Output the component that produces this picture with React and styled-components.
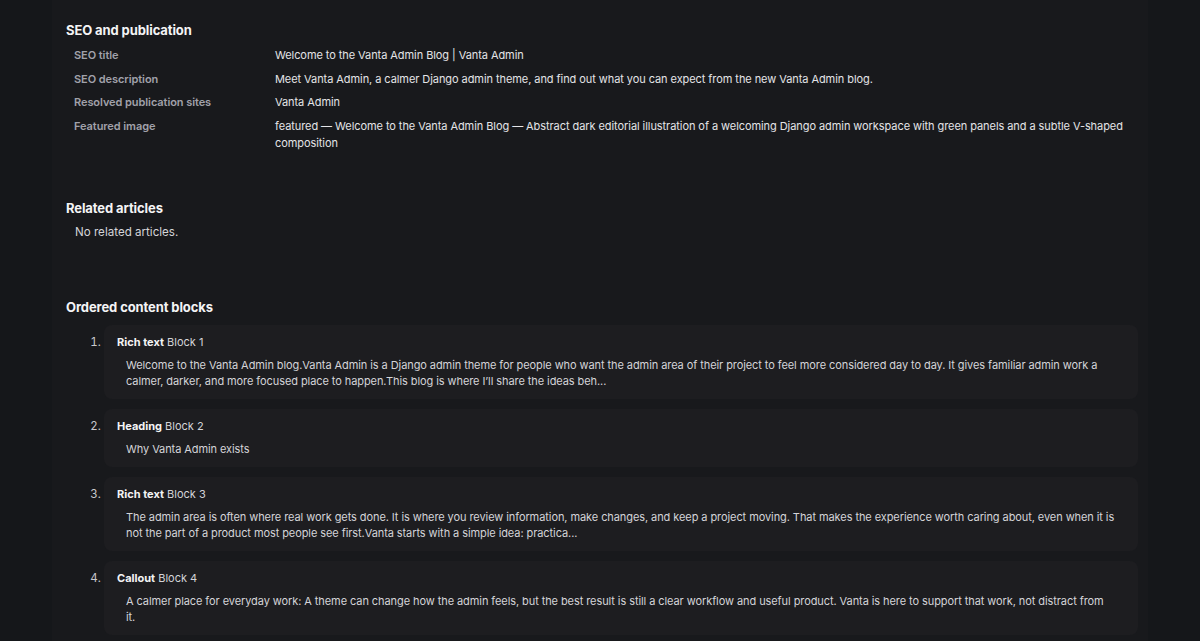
import React from 'react';
import styled, { createGlobalStyle } from 'styled-components';

const GlobalStyle = createGlobalStyle`
  html, body {
    margin: 0;
    padding: 0;
    background: #15171a;
  }
  body {
    font-family: Inter, "Noto Sans", "Liberation Sans", sans-serif;
    color: #e4e4e7;
    -webkit-font-smoothing: antialiased;
  }
`;

const Page = styled.main`
  width: 1096px;
  min-height: 100vh;
  margin: 0 auto;
  padding: 20px 10px 20px 14px;
  box-sizing: border-box;
  background: #18191c;
`;

const Section = styled.section`
  margin-bottom: ${(p) => p.$after || 0}px;
`;

const SectionTitle = styled.h2`
  margin: 0;
  font-size: 13px;
  line-height: 20px;
  font-weight: 700;
  letter-spacing: -0.1px;
  color: #f4f4f5;
`;

const Fields = styled.dl`
  display: grid;
  grid-template-columns: 201px 1fr;
  row-gap: 6.6px;
  margin: 7px 0 0 8px;
  font-size: 11px;
  line-height: 17px;
  letter-spacing: -0.07px;
`;

const Label = styled.dt`
  font-weight: 600;
  color: #a1a1aa;
`;

const Value = styled.dd`
  margin: 0;
  color: #e4e4e7;
  padding-right: 12px;
`;

const Empty = styled.p`
  margin: 6.5px 0 0 9px;
  font-size: 11.6px;
  line-height: 17px;
  color: #d4d4d8;
`;

const BlockList = styled.ol`
  margin: 8px 0 0;
  padding: 0 0 0 38px;
  list-style: decimal outside;
  display: flex;
  flex-direction: column;
  gap: 10px;
`;

const Block = styled.li`
  background: #1d1d20;
  border-radius: 8px;
  padding: 9px 23.5px 10px 13px;
  font-size: 11px;
  line-height: 16px;

  &::marker {
    color: #c8c8cc;
    font-size: 11.5px;
  }
`;

const BlockHead = styled.div`
  color: #d4d4d8;
`;

const BlockKind = styled.strong`
  font-weight: 700;
  color: #f4f4f5;
`;

const BlockBody = styled.p`
  margin: 7px 0 0 9px;
  font-size: 11px;
  line-height: 16px;
  letter-spacing: -0.08px;
  color: #d4d4d8;
`;

const seo = [
  ['SEO title', 'Welcome to the Vanta Admin Blog | Vanta Admin'],
  ['SEO description', 'Meet Vanta Admin, a calmer Django admin theme, and find out what you can expect from the new Vanta Admin blog.'],
  ['Resolved publication sites', 'Vanta Admin'],
  ['Featured image', 'featured — Welcome to the Vanta Admin Blog — Abstract dark editorial illustration of a welcoming Django admin workspace with green panels and a subtle V-shaped composition'],
];

const blocks = [
  {
    kind: 'Rich text',
    name: 'Block 1',
    body: 'Welcome to the Vanta Admin blog.Vanta Admin is a Django admin theme for people who want the admin area of their project to feel more considered day to day. It gives familiar admin work a calmer, darker, and more focused place to happen.This blog is where I’ll share the ideas beh...',
  },
  { kind: 'Heading', name: 'Block 2', body: 'Why Vanta Admin exists' },
  {
    kind: 'Rich text',
    name: 'Block 3',
    body: 'The admin area is often where real work gets done. It is where you review information, make changes, and keep a project moving. That makes the experience worth caring about, even when it is not the part of a product most people see first.Vanta starts with a simple idea: practica...',
  },
  {
    kind: 'Callout',
    name: 'Block 4',
    body: 'A calmer place for everyday work: A theme can change how the admin feels, but the best result is still a clear workflow and useful product. Vanta is here to support that work, not distract from it.',
  },
];

export default function App() {
  return (
    <>
      <GlobalStyle />
      <Page>
        <Section $after={46}>
          <SectionTitle>SEO and publication</SectionTitle>
          <Fields>
            {seo.map(([label, value]) => (
              <React.Fragment key={label}>
                <Label>{label}</Label>
                <Value>{value}</Value>
              </React.Fragment>
            ))}
          </Fields>
        </Section>

        <Section $after={56}>
          <SectionTitle>Related articles</SectionTitle>
          <Empty>No related articles.</Empty>
        </Section>

        <Section>
          <SectionTitle>Ordered content blocks</SectionTitle>
          <BlockList>
            {blocks.map((b) => (
              <Block key={b.name}>
                <BlockHead>
                  <BlockKind>{b.kind}</BlockKind> {b.name}
                </BlockHead>
                <BlockBody>{b.body}</BlockBody>
              </Block>
            ))}
          </BlockList>
        </Section>
      </Page>
    </>
  );
}
